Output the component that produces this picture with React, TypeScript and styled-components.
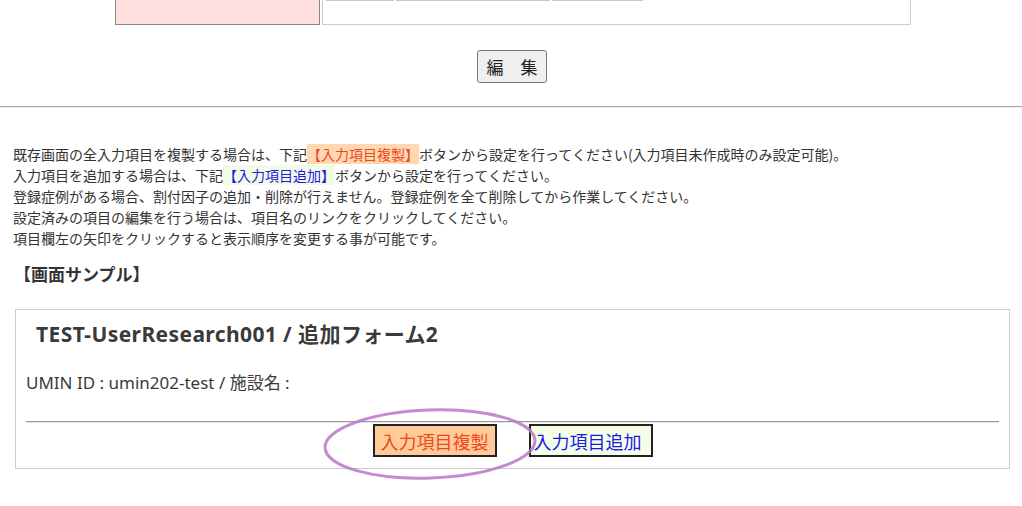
import React from "react";
import styled, { createGlobalStyle } from "styled-components";

const Global = createGlobalStyle`
  html, body { margin: 0; padding: 0; background: #fff; }
  body {
    font-family: "Noto Sans", "Noto Sans CJK JP", sans-serif;
    color: #333;
    width: 1022px;
  }
`;

const Page = styled.div`
  display: flex;
  flex-direction: column;
  width: 1022px;
  padding-bottom: 40px;
`;

const TopRow = styled.div`
  display: flex;
  gap: 2px;
  margin-left: 115px;
  width: 796px;
  height: 25px;
`;

const LabelCell = styled.div`
  width: 205px;
  box-sizing: border-box;
  background: #ffdfe0;
  border: 1px solid #888;
  border-top: none;
`;

const ValueCell = styled.div`
  flex: 1;
  box-sizing: border-box;
  border: 1px solid #ccc;
  border-top: none;
  display: flex;
  gap: 2px;
  padding-left: 3px;
  align-items: flex-start;
`;

const InputEdge = styled.div<{ $w: number }>`
  width: ${(p) => p.$w}px;
  height: 1px;
  background: #c8c8c8;
`;

const EditRow = styled.div`
  display: flex;
  justify-content: center;
  padding-top: 25px;
  padding-left: 2px;
`;

const EditButton = styled.button`
  width: 70px;
  height: 33px;
  box-sizing: border-box;
  background: #efefef;
  border: 1px solid #767676;
  border-radius: 3px;
  font-family: "Noto Sans CJK JP", sans-serif;
  font-size: 17px;
  color: #222;
  padding: 0;
`;

const Rule = styled.div`
  margin-top: 23px;
  height: 1px;
  background: #a8a8a8;
  border-bottom: 1px solid #eee;
`;

const Notes = styled.div`
  margin-top: 36px;
  padding-left: 13px;
  font-family: "Noto Sans CJK JP", sans-serif;
  font-size: 14px;
  line-height: 21px;
  color: #333;
`;

const Line = styled.div`
  white-space: nowrap;
`;

const Hi = styled.span<{ $kind: "copy" | "add" }>`
  background: ${(p) => (p.$kind === "copy" ? "#ffd8b2" : "#f3fbe7")};
  color: ${(p) => (p.$kind === "copy" ? "#f0461e" : "#1a1ae6")};
`;

const SectionTitle = styled.div`
  margin-top: 12px;
  padding-left: 14px;
  font-family: "Noto Sans CJK JP", sans-serif;
  font-weight: bold;
  font-size: 17px;
  line-height: 26px;
  color: #333;
`;

const SampleBox = styled.div`
  margin: 22px 12px 0 15px;
  border: 1px solid #ccc;
  height: 160px;
  box-sizing: border-box;
  padding: 10px 10px 0 10px;
  display: flex;
  flex-direction: column;
`;

const FormTitle = styled.div`
  padding-left: 10px;
  font-family: "Noto Sans", "Noto Sans CJK JP", sans-serif;
  font-weight: bold;
  font-size: 21px;
  letter-spacing: 0.4px;
  line-height: 28px;
  color: #3a3a3a;
`;

const Meta = styled.div`
  margin-top: 23px;
  font-family: "Noto Sans", "Noto Sans CJK JP", sans-serif;
  font-size: 17px;
  line-height: 24px;
  color: #3a3a3a;
`;

const FormRule = styled.div`
  margin-top: 26px;
  height: 1px;
  background: #999;
  border-bottom: 1px solid #e6e6e6;
`;

const ButtonRow = styled.div`
  position: relative;
  display: flex;
  justify-content: center;
  gap: 32px;
  margin-top: 1px;
  flex-shrink: 0;
`;

const ActionButton = styled.button<{ $kind: "copy" | "add" }>`
  width: 124px;
  height: 33px;
  box-sizing: border-box;
  border: 2px solid #222;
  border-radius: 0;
  padding: ${(p) => (p.$kind === "copy" ? "0" : "0 6px 0 0")};
  font-family: "Noto Sans CJK JP", sans-serif;
  font-size: 18px;
  background: ${(p) => (p.$kind === "copy" ? "#ffcc99" : "#f5ffe8")};
  color: ${(p) => (p.$kind === "copy" ? "#f0461e" : "#1a1ae6")};
`;

const Circle = styled.svg`
  position: absolute;
  left: 292px;
  top: -20px;
  overflow: visible;
  pointer-events: none;
`;

export default function App() {
  return (
    <>
      <Global />
      <Page>
        <TopRow>
          <LabelCell />
          <ValueCell>
            <InputEdge $w={68} />
            <InputEdge $w={154} />
            <InputEdge $w={91} />
          </ValueCell>
        </TopRow>
        <EditRow>
          <EditButton>編　集</EditButton>
        </EditRow>
        <Rule />
        <Notes>
          <Line>
            既存画面の全入力項目を複製する場合は、下記<Hi $kind="copy">【入力項目複製】</Hi>ボタンから設定を行ってください(入力項目未作成時のみ設定可能)。
          </Line>
          <Line>
            入力項目を追加する場合は、下記<Hi $kind="add">【入力項目追加】</Hi>ボタンから設定を行ってください。
          </Line>
          <Line>登録症例がある場合、割付因子の追加・削除が行えません。登録症例を全て削除してから作業してください。</Line>
          <Line>設定済みの項目の編集を行う場合は、項目名のリンクをクリックしてください。</Line>
          <Line>項目欄左の矢印をクリックすると表示順序を変更する事が可能です。</Line>
        </Notes>
        <SectionTitle>【画面サンプル】</SectionTitle>
        <SampleBox>
          <FormTitle>TEST-UserResearch001 / 追加フォーム2</FormTitle>
          <Meta>UMIN ID : umin202-test / 施設名 :</Meta>
          <FormRule />
          <ButtonRow>
            <ActionButton $kind="copy">入力項目複製</ActionButton>
            <ActionButton $kind="add">入力項目追加</ActionButton>
            <Circle width="224" height="84" viewBox="0 0 224 84">
              <ellipse
                cx="112"
                cy="40"
                rx="105"
                ry="34"
                transform="rotate(-2 112 40)"
                fill="none"
                stroke="#b877c9"
                strokeOpacity="0.85"
                strokeWidth="3"
              />
            </Circle>
          </ButtonRow>
        </SampleBox>
      </Page>
    </>
  );
}
